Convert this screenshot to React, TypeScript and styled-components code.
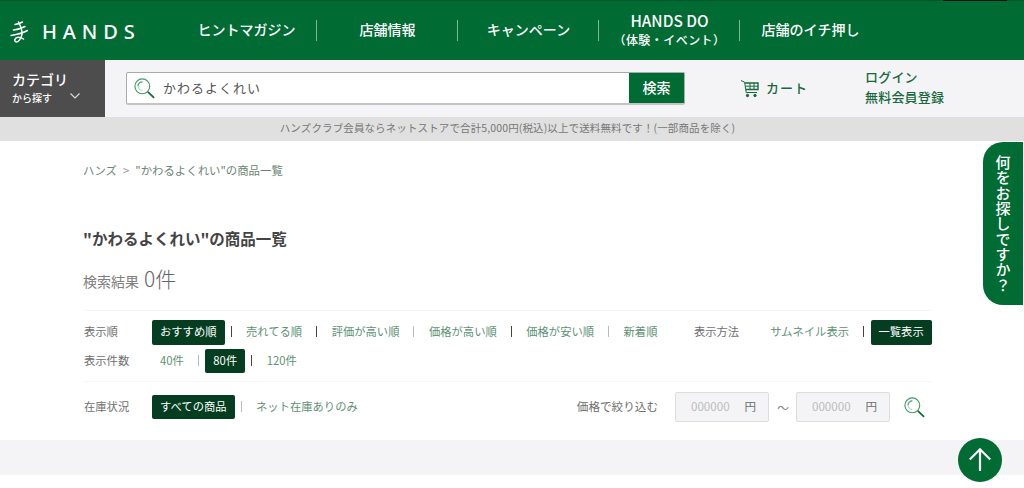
import React from "react";
import styled, { createGlobalStyle } from "styled-components";

const GlobalStyle = createGlobalStyle`
  html, body {
    margin: 0;
    padding: 0;
    background: #fff;
  }
  body {
    font-family: "Noto Sans CJK JP", "Noto Sans", sans-serif;
    overflow: hidden;
  }
`;

const Page = styled.div`
  position: relative;
  width: 1024px;
  height: 488px;
  overflow: hidden;
`;

const Header = styled.header`
  position: relative;
  display: flex;
  align-items: center;
  height: 60px;
  background: #006b33;
  border-top: 1px solid #04552b;
  box-sizing: border-box;
  color: #fff;

  &::after {
    content: "";
    position: absolute;
    top: -1px;
    left: 943px;
    width: 64px;
    height: 1px;
    background: #111;
  }
`;

const Logo = styled.div`
  display: flex;
  align-items: center;
  width: 176px;
  padding: 3px 0 0 10px;
  box-sizing: border-box;
`;

const LogoText = styled.span`
  margin-left: 14px;
  padding-bottom: 1px;
  font-family: "Noto Sans", sans-serif;
  font-size: 20px;
  font-weight: 500;
  letter-spacing: 5.9px;
`;

const Nav = styled.nav`
  display: flex;
  align-items: center;
`;

const NavItem = styled.a<{ $stacked?: boolean }>`
  display: flex;
  flex-direction: column;
  align-items: center;
  box-sizing: border-box;
  width: 140px;
  padding-left: 1px;
  padding-bottom: ${(p) => (p.$stacked ? 1 : 4)}px;
  font-size: 14px;
  font-weight: 500;
  line-height: 20px;
  white-space: nowrap;
`;

const NavEnglish = styled.span`
  font-size: 15.4px;
`;

const NavSub = styled.span`
  font-size: 12px;
  letter-spacing: 0.45px;
`;

const NavDivider = styled.span`
  width: 1px;
  height: 21px;
  background: #7fb598;
`;

const SubHeader = styled.div`
  display: flex;
  align-items: center;
  height: 57px;
  background: #f4f4f6;
`;

const CategoryButton = styled.div`
  display: flex;
  flex-direction: column;
  justify-content: center;
  width: 105px;
  height: 57px;
  padding: 0 0 2px 12px;
  box-sizing: border-box;
  background: #4d4d4d;
  color: #fff;
`;

const CategoryTitle = styled.span`
  font-size: 14px;
  font-weight: 500;
  line-height: 20px;
`;

const CategorySub = styled.span`
  display: flex;
  align-items: center;
  font-size: 10px;
  line-height: 18px;
  font-weight: 500;
`;

const Chevron = styled.svg`
  margin: 0 0 4px 18px;
`;

const SearchBox = styled.div`
  display: flex;
  align-items: center;
  width: 559px;
  height: 33px;
  margin-left: 21px;
  box-sizing: border-box;
  background: #fff;
  border: 1px solid #aaa;
  border-bottom-width: 2px;
  border-bottom-color: #c4c4c4;
  border-radius: 2px;
`;

const SearchIconSlot = styled.span`
  display: flex;
  margin-left: 7px;
`;

const SearchValue = styled.span`
  flex: 1;
  margin-left: 8px;
  padding-bottom: 2px;
  font-size: 13px;
  letter-spacing: 1px;
  color: #555;
`;

const SearchButton = styled.div`
  display: flex;
  align-items: center;
  justify-content: center;
  box-sizing: border-box;
  width: 55px;
  height: 100%;
  padding-bottom: 2px;
  background: #006b33;
  color: #fff;
  font-size: 14px;
  font-weight: 500;
`;

const CartLink = styled.a`
  display: flex;
  align-items: center;
  margin-left: 55px;
  width: 125px;
  font-size: 13px;
  font-weight: 500;
  letter-spacing: 1px;
  color: #17693d;
`;

const CartLabel = styled.span`
  margin-left: 6px;
  padding-bottom: 2px;
`;

const AccountLinks = styled.div`
  display: flex;
  flex-direction: column;
  padding-bottom: 3px;
  font-size: 13px;
  font-weight: 500;
  letter-spacing: 0.2px;
  line-height: 20px;
  color: #17693d;
`;

const Notice = styled.div`
  height: 24px;
  box-sizing: border-box;
  padding-right: 9px;
  line-height: 22px;
  text-align: center;
  background: #e0e0e0;
  font-size: 10.5px;
  letter-spacing: 0.12px;
  color: #777;
`;

const Main = styled.main`
  height: 299px;
  padding: 0 93px 0 84px;
`;

const Breadcrumb = styled.div`
  margin-left: -1px;
  padding-top: 21px;
  font-size: 11.4px;
  line-height: 17px;
  color: #6b8574;
`;

const BreadcrumbArrow = styled.span`
  margin: 0 6px;
  color: #999;
`;

const Title = styled.h1`
  margin: 48px 0 0 -1px;
  font-size: 15.5px;
  font-weight: 700;
  line-height: 22px;
  color: #444;
`;

const ResultCount = styled.div`
  display: flex;
  align-items: baseline;
  margin: 14px 0 0 -1px;
  height: 34px;
  font-size: 14px;
  color: #808080;
`;

const CountNumber = styled.span`
  margin-left: 5px;
  font-size: 21px;
  font-weight: 300;
  color: #666;
`;

const FilterBlock = styled.div<{ $top: number }>`
  margin-top: ${(p) => p.$top}px;
  border-top: 1px solid #f5f5f5;
`;

const FilterRow = styled.div<{ $top: number; $height: number; $lift: number }>`
  --lift: ${(p) => p.$lift}px;
  display: flex;
  align-items: center;
  margin-top: ${(p) => p.$top}px;
  height: ${(p) => p.$height}px;
  font-size: 11.3px;
  white-space: nowrap;
`;

const FilterLabel = styled.span`
  flex: none;
  width: 68px;
  padding-bottom: var(--lift);
  color: #6f6f6f;
`;

const Option = styled.a<{ $active?: boolean }>`
  display: flex;
  flex: none;
  align-items: center;
  box-sizing: border-box;
  height: 100%;
  padding: 0 8px var(--lift);
  border-radius: 2px;
  color: ${(p) => (p.$active ? "#fff" : "#5c9274")};
  background: ${(p) => (p.$active ? "#043d20" : "transparent")};
`;

const Separator = styled.span<{ $dark?: boolean }>`
  flex: none;
  width: 1px;
  height: 11px;
  margin: 0 6.5px 2px 6px;
  background: ${(p) => (p.$dark ? "#444" : "#bbb")};
`;

const ViewLabel = styled.span`
  flex: none;
  margin: 0 23px 0 28.5px;
  padding-bottom: var(--lift);
  color: #6f6f6f;
`;

const PriceFilter = styled.div`
  display: flex;
  align-items: center;
  margin-left: auto;
  font-size: 11.6px;
  color: #6f6f6f;
`;

const PriceLabel = styled.span`
  padding-bottom: 3px;
`;

const PriceField = styled.div`
  display: flex;
  align-items: center;
  justify-content: space-between;
  width: 94px;
  height: 30px;
  padding: 0 12px 3px 15px;
  box-sizing: border-box;
  background: #f4f4f6;
  border: 1px solid #ddd;
  border-radius: 2px;
  margin-left: 17px;
`;

const PricePlaceholder = styled.span`
  color: #bbb;
`;

const PriceTilde = styled.span`
  margin: 0 -10px 0 8px;
  font-size: 12px;
  color: #888;
`;

const PriceSearchIcon = styled.span`
  display: flex;
  margin: 0 6px 0 14px;
`;

const FooterBand = styled.div`
  height: 35px;
  background: #f4f4f6;
`;

const SideTab = styled.a`
  position: absolute;
  top: 142px;
  right: 1px;
  display: flex;
  justify-content: center;
  align-items: center;
  width: 40px;
  height: 163px;
  border-radius: 20px 0 0 20px;
  background: #006b33;
  color: #fff;
  font-size: 15px;
  font-weight: 500;
  line-height: 1;
  letter-spacing: 0.3px;
  writing-mode: vertical-rl;
`;

const PageTop = styled.a`
  position: absolute;
  left: 958px;
  top: 438px;
  display: flex;
  align-items: center;
  justify-content: center;
  width: 44px;
  height: 44px;
  border-radius: 50%;
  background: #006b33;
`;

const LoupeIcon = () => (
  <svg width="21" height="21" viewBox="0 0 24 24" fill="none">
    <circle cx="9.5" cy="9.5" r="8.5" stroke="#3f9a66" strokeWidth="1.3" />
    <path d="M4.6 9.5a5 5 0 0 1 5-5" stroke="#3f9a66" strokeWidth="1.3" />
    <path d="M4.8 9.5a4.8 4.8 0 0 0 4.8 4.8" stroke="#9cc9ae" strokeWidth="1" />
    <path d="M15.8 15.8 23 22.6" stroke="#0d6b39" strokeWidth="2" />
  </svg>
);

const CartIcon = () => (
  <svg width="20" height="20" viewBox="0 0 20 20" fill="none" stroke="#17693d">
    <path d="M1 1.5 4.6 3.2 6.2 13.5H17" strokeWidth="1" />
    <path d="M5 4H18V10.5H6" strokeWidth="1.4" />
    <path d="M5.5 7.2H18M10 4V10.5M14 4V10.5" strokeWidth="1" />
    <circle cx="7.5" cy="16.5" r="1.2" fill="#17693d" />
    <circle cx="15" cy="16.5" r="1.2" fill="#17693d" />
  </svg>
);

const LogoMark = () => (
  <svg width="18" height="22" viewBox="0 0 18 22" fill="none" stroke="#fff" strokeWidth="1.5" strokeLinecap="round">
    <path d="M5 3.5C7.5 3.2 10 2.4 12.5 1" />
    <path d="M3.5 9C7.5 8.6 11 7.5 15 5.5" />
    <path d="M1 14.5C7 13.5 13 12 17.5 9.5" />
    <path d="M8.5 1C10.5 5 12.5 9 12 13C11.5 17 8.5 21.5 6 20.8C3.5 20 5 16.5 8 16.3C10.5 16.2 12 17 13.5 18" />
  </svg>
);

const ChevronDown = () => (
  <Chevron width="10" height="6" viewBox="0 0 10 6" fill="none" stroke="#ddd" strokeWidth="1.1">
    <path d="M.5.5 5 5 9.5.5" />
  </Chevron>
);

const ArrowUp = () => (
  <svg width="26" height="26" viewBox="0 0 26 26" fill="none" stroke="#fff" strokeWidth="2.2">
    <path d="M13 24V2.5M2.8 12.5 13 2.3 23.2 12.5" />
  </svg>
);

const navItems = ["ヒントマガジン", "店舗情報", "キャンペーン"];

export default function App() {
  return (
    <Page>
      <GlobalStyle />
      <Header>
        <Logo>
          <LogoMark />
          <LogoText>HANDS</LogoText>
        </Logo>
        <Nav>
          {navItems.map((label) => (
            <React.Fragment key={label}>
              <NavItem>{label}</NavItem>
              <NavDivider />
            </React.Fragment>
          ))}
          <NavItem $stacked>
            <NavEnglish>HANDS DO</NavEnglish>
            <NavSub>（体験・イベント）</NavSub>
          </NavItem>
          <NavDivider />
          <NavItem>店舗のイチ押し</NavItem>
        </Nav>
      </Header>

      <SubHeader>
        <CategoryButton>
          <CategoryTitle>カテゴリ</CategoryTitle>
          <CategorySub>
            から探す
            <ChevronDown />
          </CategorySub>
        </CategoryButton>
        <SearchBox>
          <SearchIconSlot>
            <LoupeIcon />
          </SearchIconSlot>
          <SearchValue>かわるよくれい</SearchValue>
          <SearchButton>検索</SearchButton>
        </SearchBox>
        <CartLink>
          <CartIcon />
          <CartLabel>カート</CartLabel>
        </CartLink>
        <AccountLinks>
          <span>ログイン</span>
          <span>無料会員登録</span>
        </AccountLinks>
      </SubHeader>

      <Notice>ハンズクラブ会員ならネットストアで合計5,000円(税込)以上で送料無料です！(一部商品を除く)</Notice>

      <Main>
        <Breadcrumb>
          ハンズ<BreadcrumbArrow>&gt;</BreadcrumbArrow>"かわるよくれい"の商品一覧
        </Breadcrumb>
        <Title>"かわるよくれい"の商品一覧</Title>
        <ResultCount>
          検索結果<CountNumber>0件</CountNumber>
        </ResultCount>

        <FilterBlock $top={13}>
          <FilterRow $top={9} $height={25} $lift={4}>
            <FilterLabel>表示順</FilterLabel>
            <Option $active>おすすめ順</Option>
            <Separator $dark />
            <Option>売れてる順</Option>
            <Separator $dark />
            <Option>評価が高い順</Option>
            <Separator />
            <Option>価格が高い順</Option>
            <Separator $dark />
            <Option>価格が安い順</Option>
            <Separator />
            <Option>新着順</Option>
            <ViewLabel>表示方法</ViewLabel>
            <Option>サムネイル表示</Option>
            <Separator $dark />
            <Option $active>一覧表示</Option>
          </FilterRow>
          <FilterRow $top={4} $height={24} $lift={2}>
            <FilterLabel>表示件数</FilterLabel>
            <Option>40件</Option>
            <Separator />
            <Option $active>80件</Option>
            <Separator $dark />
            <Option>120件</Option>
          </FilterRow>
        </FilterBlock>

        <FilterBlock $top={8}>
          <FilterRow $top={13} $height={24} $lift={2}>
            <FilterLabel>在庫状況</FilterLabel>
            <Option $active>すべての商品</Option>
            <Separator />
            <Option>ネット在庫ありのみ</Option>
            <PriceFilter>
              <PriceLabel>価格で絞り込む</PriceLabel>
              <PriceField>
                <PricePlaceholder>000000</PricePlaceholder>
                <span>円</span>
              </PriceField>
              <PriceTilde>〜</PriceTilde>
              <PriceField>
                <PricePlaceholder>000000</PricePlaceholder>
                <span>円</span>
              </PriceField>
              <PriceSearchIcon>
                <LoupeIcon />
              </PriceSearchIcon>
            </PriceFilter>
          </FilterRow>
        </FilterBlock>
      </Main>

      <FooterBand />

      <SideTab>何をお探しですか？</SideTab>
      <PageTop>
        <ArrowUp />
      </PageTop>
    </Page>
  );
}
